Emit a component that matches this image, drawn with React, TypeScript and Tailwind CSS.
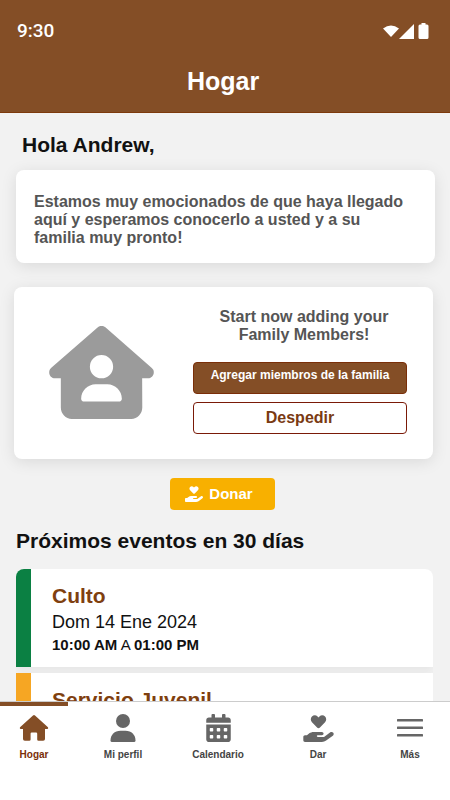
import type { ReactNode } from "react";
import { FaCalendarAlt } from "react-icons/fa";
import { FaHandHoldingHeart, FaHouseUser } from "react-icons/fa6";

const events = [
  { title: "Culto", date: "Dom 14 Ene 2024", from: "10:00 AM", to: "01:00 PM", color: "bg-[#0b8043]" },
  { title: "Servicio Juvenil", color: "bg-[#f6a623]" },
];

function StatusBar() {
  return (
    <div className="flex items-center justify-between pt-[19px] pr-[21px] pl-[17px]">
      <span className="font-[Roboto,sans-serif] text-[19px] leading-6 font-medium text-white">9:30</span>
      <svg width="48" height="18" viewBox="0 0 48 18" fill="#fff" aria-hidden="true">
        <path d="M10 15 L2 6.6 Q10 .4 18 6.6 Z" />
        <path d="M33 2 V17 H18 Z" />
        <path d="M40.500 1 h4 v1.500 h1.500 a1.500 1.500 0 0 1 1.500 1.500 v11.500 a1.500 1.500 0 0 1 -1.500 1.500 h-7 a1.500 1.500 0 0 1 -1.500 -1.500 v-11.500 a1.500 1.500 0 0 1 1.500 -1.500 h1.500 z" />
      </svg>
    </div>
  );
}

function HomeIcon() {
  return (
    <svg width="30" height="26" viewBox="0 0 30 26" fill="currentColor" aria-hidden="true">
      <path d="M14 .5 Q15 -.3 16 .5 L28.700 12 Q29.600 12.900 28.800 13.700 Q28.400 14.100 27.600 14.100 H26 V24 Q26 25.800 24.200 25.800 H19.500 Q18.200 25.800 18.200 24.500 V18.600 Q18.200 17.400 17 17.400 H12.800 Q11.600 17.400 11.600 18.600 V24.500 Q11.600 25.800 10.300 25.800 H5.800 Q4 25.800 4 24 V14.100 H2.400 Q1.600 14.100 1.200 13.700 Q.4 12.900 1.300 12 Z" />
    </svg>
  );
}

function UserIcon() {
  return (
    <svg width="26" height="28" viewBox="0 0 26 28" fill="currentColor" aria-hidden="true">
      <circle cx="13" cy="7" r="7" />
      <path d="M10.500 16.800 h5 C21.500 16.800 25.500 20.800 25.500 26.500 Q25.500 28 24 28 H2 Q.5 28 .5 26.500 C.5 20.800 4.500 16.800 10.500 16.800 Z" />
    </svg>
  );
}

function MenuIcon() {
  return (
    <svg width="26" height="20" viewBox="0 0 26 20" fill="currentColor" aria-hidden="true">
      <rect y="1" width="26" height="2.500" rx=".6" />
      <rect y="8.500" width="26" height="2.500" rx=".6" />
      <rect y="16" width="26" height="2.500" rx=".6" />
    </svg>
  );
}

function NavItem({ label, active, children }: { label: string; active?: boolean; children: ReactNode }) {
  return (
    <a href="#" className={`flex flex-col items-center border-t-4 pt-1.5 ${active ? "border-[#844e26] text-[#844e26]" : "border-transparent text-[#666]"}`}>
      <span className="flex h-8 items-center">{children}</span>
      <span className={`mt-[3px] text-[10px] leading-4 font-bold ${active ? "text-[#7a2e08]" : "text-[#444]"}`}>{label}</span>
    </a>
  );
}

export default function App() {
  return (
    <div className="flex h-screen flex-col bg-[#f2f2f2] font-['Liberation_Sans',Arial,sans-serif]">
      <header className="h-[113px] shrink-0 border-b border-[#7d3a0c] bg-[#844e26]">
        <StatusBar />
        <h1 className="mt-5 pr-1 text-center text-[25px] leading-9 font-bold text-white">Hogar</h1>
      </header>

      <main className="min-h-0 flex-1 overflow-hidden px-4 pt-5">
        <h2 className="pl-1.5 text-[21px] leading-6 font-bold text-[#111]">Hola Andrew,</h2>

        <div className="-mr-px mt-[13px] rounded-lg bg-white pt-[23px] pr-7 pb-4 pl-[18px] shadow-[0_3px_16px_rgba(0,0,0,0.1)]">
          <p className="text-base leading-[18px] font-bold text-[#555]">
            Estamos muy emocionados de que haya llegado aquí y esperamos conocerlo a usted y a su familia muy pronto!
          </p>
        </div>

        <div className="mt-6 mr-px -ml-0.5 flex rounded-lg bg-white pt-[21px] pr-[26px] pb-[25px] pl-[35px] shadow-[0_3px_16px_rgba(0,0,0,0.1)]">
          <FaHouseUser className="mt-[18px] h-[93px] w-[105px] shrink-0 text-[#9b9b9b]" />
          <div className="ml-[39px] flex flex-1 flex-col gap-2">
            <p className="mb-2.5 pr-3 pl-5 text-center text-base leading-[18px] font-bold text-[#555]">
              Start now adding your Family Members!
            </p>
            <button className="h-8 rounded border border-[#7a2e08] bg-[#844e26] pb-1.5 text-xs font-bold whitespace-nowrap text-white">
              Agregar miembros de la familia
            </button>
            <button className="h-8 rounded border border-[#7a1a08] bg-white text-base font-bold text-[#7a3a12]">Despedir</button>
          </div>
        </div>

        <div className="mt-[19px] flex justify-center pr-1.5">
          <button className="flex h-8 w-[105px] items-center justify-center gap-1.5 rounded bg-[#f8b000] pr-1.5 text-[15px] font-bold text-white">
            <FaHandHoldingHeart className="size-[18px]" />
            Donar
          </button>
        </div>

        <h2 className="mt-[19px] text-[21px] leading-6 font-bold text-[#111]">Próximos eventos en 30 días</h2>

        <div className="mt-4 mr-px flex flex-col gap-1.5 overflow-hidden rounded-lg">
          {events.map((e) => (
            <div key={e.title} className="flex bg-white shadow-[0_3px_8px_rgba(0,0,0,0.06)]">
              <div className={`w-[15px] ${e.color}`} />
              <div className="pt-[14px] pb-3 pl-[21px] text-[#111]">
                <h3 className="text-[21px] leading-[26px] font-bold text-[#7f400f]">{e.title}</h3>
                {e.date && (
                  <>
                    <p className="text-lg leading-[26px]">{e.date}</p>
                    <p className="text-[15px] leading-5">
                      <b>{e.from}</b> A <b>{e.to}</b>
                    </p>
                  </>
                )}
              </div>
            </div>
          ))}
        </div>
      </main>

      <nav className="grid h-[99px] shrink-0 grid-cols-[68fr_110fr_80fr_120fr_64fr] border-t border-[#ccc] bg-white pr-2">
        <NavItem label="Hogar" active>
          <HomeIcon />
        </NavItem>
        <NavItem label="Mi perfil">
          <UserIcon />
        </NavItem>
        <NavItem label="Calendario">
          <FaCalendarAlt className="h-7 w-[25px]" />
        </NavItem>
        <NavItem label="Dar">
          <FaHandHoldingHeart className="h-[27px] w-[31px]" />
        </NavItem>
        <NavItem label="Más">
          <MenuIcon />
        </NavItem>
      </nav>
    </div>
  );
}
